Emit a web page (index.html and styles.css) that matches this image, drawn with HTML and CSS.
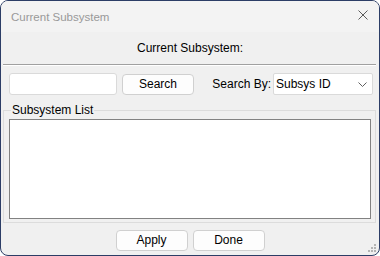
FILE: index.html
```html
<!DOCTYPE html>
<html lang="en">
<head>
  <meta charset="utf-8">
  <title>Current Subsystem</title>
  <link rel="stylesheet" href="styles.css">
</head>
<body>
  <div class="window">
    <div class="titlebar">
      <span class="title">Current Subsystem</span>
      <svg class="close" width="10" height="10" viewBox="0 0 10 10">
        <path d="M0.5 0.5 L9.5 9.5 M9.5 0.5 L0.5 9.5" stroke="#5a5a5a" stroke-width="1" fill="none"/>
      </svg>
    </div>

    <div class="heading">Current Subsystem:</div>
    <div class="separator"></div>

    <div class="search-row">
      <input type="text" class="search-input">
      <button class="btn btn-search">Search</button>
      <label class="search-by" for="searchBy">Search By:</label>
      <div class="select" id="searchBy">
        <span>Subsys ID</span>
        <svg width="9" height="5" viewBox="0 0 9 5">
          <path d="M0.5 0.5 L4.5 4.5 L8.5 0.5" stroke="#606060" stroke-width="1" fill="none"/>
        </svg>
      </div>
    </div>

    <fieldset class="group">
      <legend>Subsystem List</legend>
      <div class="listbox"></div>
    </fieldset>

    <div class="actions">
      <button class="btn">Apply</button>
      <button class="btn">Done</button>
    </div>

    <svg class="grip" width="9" height="9" viewBox="0 0 9 9">
      <rect x="7" y="1" width="2" height="2" fill="#b4b4b4"/>
      <rect x="4" y="4" width="2" height="2" fill="#b4b4b4"/>
      <rect x="7" y="4" width="2" height="2" fill="#b4b4b4"/>
      <rect x="1" y="7" width="2" height="2" fill="#b4b4b4"/>
      <rect x="4" y="7" width="2" height="2" fill="#b4b4b4"/>
      <rect x="7" y="7" width="2" height="2" fill="#b4b4b4"/>
    </svg>
  </div>
</body>
</html>
```

FILE: styles.css
```css
* {
  box-sizing: border-box;
}

body {
  margin: 0;
  background: #ffffff;
  font-family: "Liberation Sans", Arial, sans-serif;
  font-size: 12px;
  color: #000;
}

.window {
  position: relative;
  width: 380px;
  height: 256px;
  border: 1px solid #2c3d66;
  border-radius: 8px;
  background: #f0f0f0;
  display: flex;
  flex-direction: column;
  overflow: hidden;
}

.titlebar {
  height: 31px;
  flex: none;
  display: flex;
  align-items: center;
  justify-content: space-between;
  padding: 0 11px 0 10px;
  background: #f3f3f3;
}

.title {
  font-size: 11.5px;
  color: #999999;
}

.close {
  margin-top: -3px;
}

.heading {
  padding: 9px 0;
  line-height: 14px;
  text-align: center;
}

.separator {
  margin: 0 3px 0 2px;
  border-top: 1px solid #a0a0a0;
  border-bottom: 1px solid #ffffff;
}

.search-row {
  display: flex;
  align-items: flex-start;
  margin-top: 7px;
  padding: 0 6px 0 8px;
}

.search-input {
  width: 108px;
  height: 22px;
  margin: 0;
  border: 1px solid #dadada;
  border-radius: 3px;
  background: #ffffff;
  font: inherit;
}

.btn {
  width: 72px;
  height: 21px;
  margin: 0;
  padding: 0;
  border: 1px solid #d0d0d0;
  border-radius: 4px;
  background: #fdfdfd;
  font: inherit;
  color: #000;
  line-height: 19px;
}

.btn-search {
  margin-top: 1px;
  margin-left: 5px;
}

.search-by {
  margin-left: auto;
  margin-right: 2px;
  line-height: 22px;
}

.select {
  width: 100px;
  height: 22px;
  display: flex;
  align-items: center;
  justify-content: space-between;
  padding: 0 5px 0 2px;
  border: 1px solid #dadada;
  border-radius: 2px;
  background: #ffffff;
}

.group {
  margin: 8px 3px 0 2px;
  padding: 2px 4px 3px 5px;
  border: 1px solid #dcdcdc;
  border-radius: 0;
  min-width: 0;
}

.group legend {
  padding: 0 1px;
  margin-left: 2px;
  line-height: 14px;
}

.listbox {
  height: 100px;
  border: 1px solid #828282;
  background: #ffffff;
}

.actions {
  display: flex;
  justify-content: center;
  gap: 5px;
  margin-top: 7px;
}

.grip {
  position: absolute;
  right: 3px;
  bottom: 3px;
}
```
